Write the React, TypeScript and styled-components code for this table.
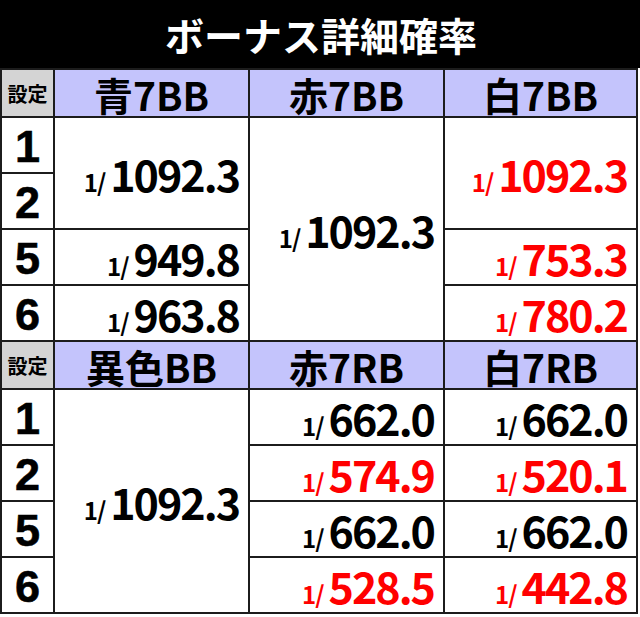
import React from 'react';
import styled, { createGlobalStyle } from 'styled-components';

const GlobalStyle = createGlobalStyle`
  html, body {
    margin: 0;
    padding: 0;
    background: #ffffff;
  }
  body {
    font-family: "Noto Sans CJK JP", "Noto Sans", sans-serif;
  }
`;

type Value = { v: string; red?: boolean; span?: number };

type Section = {
  heads: string[];
  cols: Value[][];
};

const SETTINGS = ['1', '2', '5', '6'];

const sections: Section[] = [
  {
    heads: ['青7BB', '赤7BB', '白7BB'],
    cols: [
      [{ v: '1092.3', span: 2 }, { v: '949.8' }, { v: '963.8' }],
      [{ v: '1092.3', span: 4 }],
      [{ v: '1092.3', span: 2, red: true }, { v: '753.3', red: true }, { v: '780.2', red: true }],
    ],
  },
  {
    heads: ['異色BB', '赤7RB', '白7RB'],
    cols: [
      [{ v: '1092.3', span: 4 }],
      [{ v: '662.0' }, { v: '574.9', red: true }, { v: '662.0' }, { v: '528.5', red: true }],
      [{ v: '662.0' }, { v: '520.1', red: true }, { v: '662.0' }, { v: '442.8', red: true }],
    ],
  },
];

function App() {
  return (
    <Page>
      <GlobalStyle />
      <TitleBar>ボーナス詳細確率</TitleBar>
      <Grid>
        {sections.map((sec, si) => {
          const base = si * 5 + 1;
          return (
            <React.Fragment key={si}>
              <SettingHead $row={base} $col={1}>設定</SettingHead>
              {sec.heads.map((h, hi) => (
                <HeadCell key={h} $row={base} $col={hi + 2}>{h}</HeadCell>
              ))}
              {SETTINGS.map((s, i) => (
                <SettingCell key={s} $row={base + 1 + i} $col={1}>{s}</SettingCell>
              ))}
              {sec.cols.map((col, ci) => {
                let r = base + 1;
                return col.map((val, vi) => {
                  const span = val.span ?? 1;
                  const row = r;
                  r += span;
                  return (
                    <ValueCell key={`${ci}-${vi}`} $row={row} $col={ci + 2} $span={span} $red={val.red}>
                      <Prefix>1/</Prefix>
                      <Big>{val.v}</Big>
                    </ValueCell>
                  );
                });
              })}
            </React.Fragment>
          );
        })}
      </Grid>
    </Page>
  );
}

const Page = styled.div`
  width: 640px;
  height: 617px;
  background: #ffffff;
  overflow: hidden;
`;

const TitleBar = styled.div`
  height: 68px;
  background: #000000;
  color: #ffffff;
  display: flex;
  align-items: center;
  justify-content: center;
  font-family: "Noto Sans CJK JP", sans-serif;
  font-weight: 700;
  font-size: 39px;
  padding-left: 2px;
  box-sizing: border-box;
`;

const Grid = styled.div`
  display: grid;
  width: 638px;
  box-sizing: border-box;
  padding: 2px;
  gap: 2px;
  background: #1c1c1c;
  grid-template-columns: 51px 193px 193px 191px;
  grid-template-rows: 46px repeat(4, 54px) 46px repeat(4, 54px);
`;

type Pos = { $row: number; $col: number; $span?: number };

const Cell = styled.div<Pos>`
  grid-row: ${p => p.$row} / span ${p => p.$span ?? 1};
  grid-column: ${p => p.$col};
  display: flex;
  align-items: center;
  justify-content: center;
  font-family: "Noto Sans CJK JP", sans-serif;
  font-weight: 700;
  color: #000000;
`;

const SettingHead = styled(Cell)`
  background: #d4d4d4;
  font-size: 20px;
  padding-top: 1px;
`;

const HeadCell = styled(Cell)`
  background: #c4c4fc;
  font-size: 39px;
  line-height: 1;
  padding-top: 2px;
`;

const SettingCell = styled(Cell)`
  background: #ffffff;
  font-family: "Liberation Sans", Arial, sans-serif;
  font-size: 45px;
  line-height: 1;
  padding-top: 2px;
  -webkit-text-stroke: 0.6px #000000;
`;

const ValueCell = styled(Cell)<{ $red?: boolean }>`
  background: #ffffff;
  justify-content: flex-end;
  align-items: baseline;
  align-content: center;
  flex-wrap: wrap;
  padding-right: 9px;
  color: ${p => (p.$red ? '#ff0000' : '#000000')};
  line-height: 1;
`;

const Prefix = styled.span`
  font-size: 24px;
  letter-spacing: -1px;
  margin-right: 5px;
`;

const Big = styled.span`
  font-size: 43px;
  letter-spacing: -2px;
`;

export default App;
